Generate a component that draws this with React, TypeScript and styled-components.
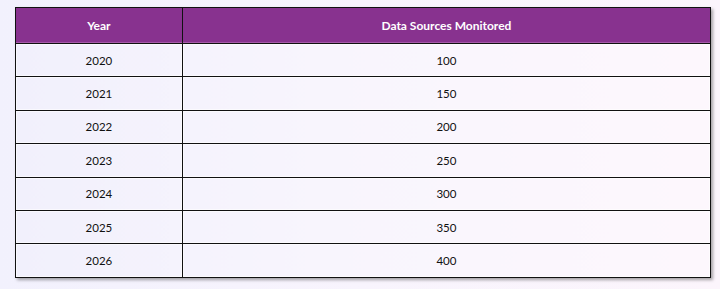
import React from "react";
import styled, { createGlobalStyle } from "styled-components";

const Global = createGlobalStyle`
  html, body { margin: 0; padding: 0; }
  body {
    width: 720px;
    height: 289px;
    background: linear-gradient(90deg, #f2f1fd 0%, #f8f4fd 50%, #fcf5fc 100%);
    font-family: "Lato", "Noto Sans", sans-serif;
    overflow: hidden;
  }
`;

const Wrap = styled.div`
  padding: 7px 9px 0 15px;
`;

const Table = styled.table`
  width: 696px;
  border-collapse: collapse;
  box-shadow: 2px 2px 3px rgba(0, 0, 0, 0.35);
  font-size: 11.5px;
  background: linear-gradient(90deg, #f1f0fc 0%, #f8f5fd 45%, #fdf7fd 100%);
`;

const HeadCell = styled.th<{ $w: string }>`
  width: ${(p) => p.$w};
  height: 35px;
  padding: 0;
  background: #88328f;
  color: #ffffff;
  font-size: 12px;
  font-weight: 700;
  text-align: center;
  border: 1px solid #111;
  box-shadow: inset 0 -1px 0 #a55aa9;
`;

const Row = styled.tr`
  height: 33.4px;
`;

const Cell = styled.td`
  padding: 0;
  text-align: center;
  color: #111;
  border: 1px solid #111;
  box-shadow: inset 0 0 0 1px rgba(255, 255, 255, 0.6);
`;

const data: [number, number][] = [
  [2020, 100],
  [2021, 150],
  [2022, 200],
  [2023, 250],
  [2024, 300],
  [2025, 350],
  [2026, 400],
];

export default function App() {
  return (
    <>
      <Global />
      <Wrap>
        <Table>
          <thead>
            <tr>
              <HeadCell $w="24%">Year</HeadCell>
              <HeadCell $w="76%">Data Sources Monitored</HeadCell>
            </tr>
          </thead>
          <tbody>
            {data.map(([y, v]) => (
              <Row key={y}>
                <Cell>{y}</Cell>
                <Cell>{v}</Cell>
              </Row>
            ))}
          </tbody>
        </Table>
      </Wrap>
    </>
  );
}
